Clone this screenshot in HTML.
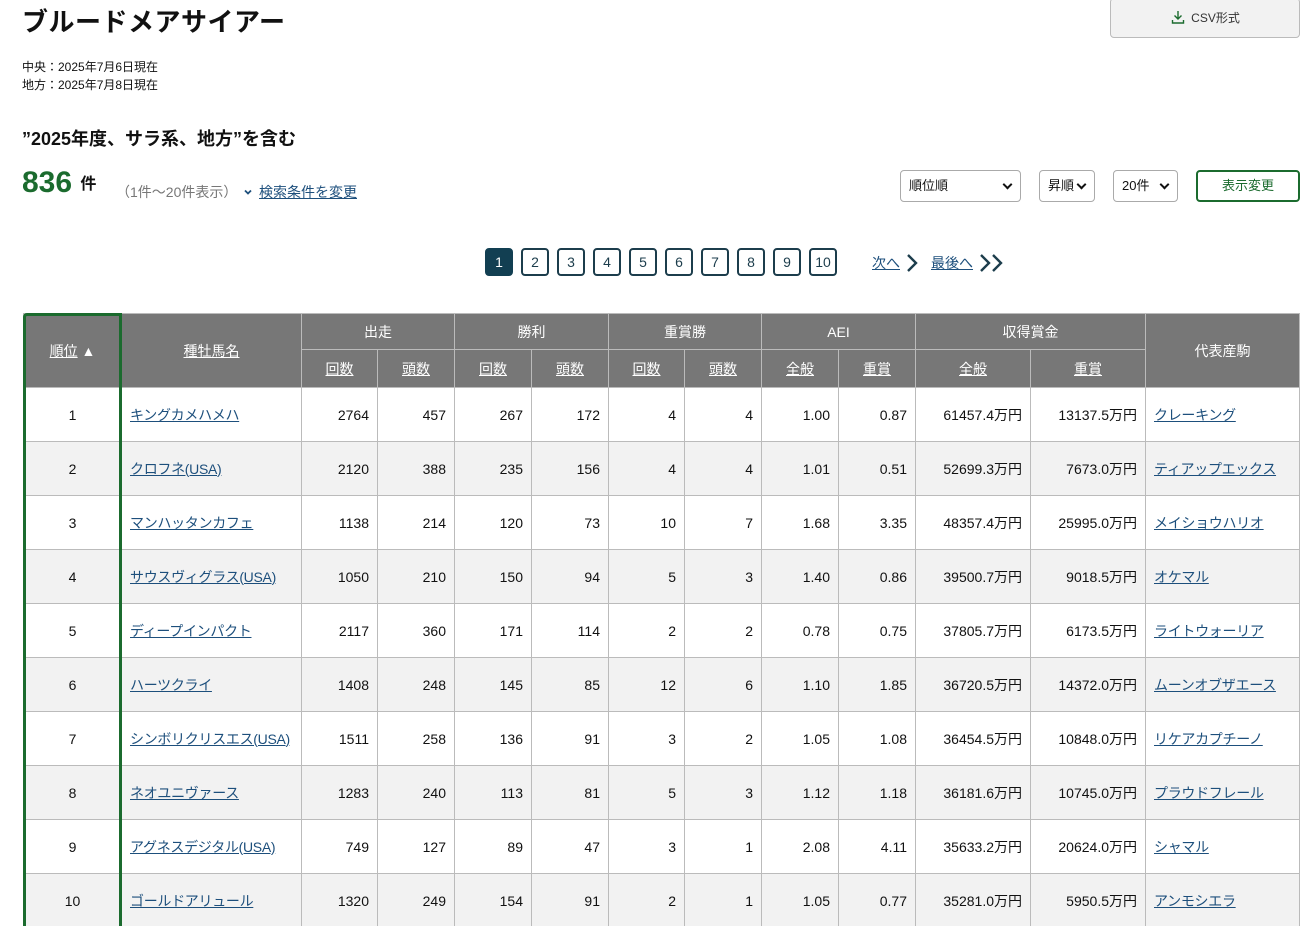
<!DOCTYPE html>
<html><head><meta charset="utf-8">
<style>
*{box-sizing:border-box;margin:0;padding:0}
html,body{width:1311px;height:926px;overflow:hidden}
body{background:#fff;font-family:"Liberation Sans","Noto Sans CJK JP",sans-serif;color:#111;position:relative}
.abs{position:absolute}
h1{position:absolute;left:22px;top:2px;font-size:26px;font-weight:700;letter-spacing:0.5px}
.date{position:absolute;left:22px;font-size:12px;line-height:18px}
.cond{position:absolute;left:22px;top:125px;font-size:18px;font-weight:700}
.count{position:absolute;left:22px;top:166px;font-size:30px;font-weight:700;color:#1b6b2e}
a{color:#1d4f7c;text-decoration:underline}
.sel{position:absolute;top:170px;height:32px;border:1px solid #aaa;border-radius:4px;font-size:13px;padding:0 8px;line-height:30px;background:#fff}
.sel::after{content:"";position:absolute;right:9px;top:10px;width:5px;height:5px;border-right:2px solid #111;border-bottom:2px solid #111;transform:rotate(45deg)}
.pg{position:absolute;top:248px;width:28px;height:28px;border:2px solid #1c3d4c;border-radius:4px;font-size:14px;text-align:center;line-height:24px;color:#1c3d4c}
table{position:absolute;left:23px;top:313px;border-collapse:collapse;table-layout:fixed;font-size:14px}
th{background:#777;color:#fff;font-weight:normal;border:1px solid #bbb;font-size:14px}
td{border:1px solid #bbb;height:54px;padding:0 8px;text-align:right;white-space:nowrap}
tr.e td{background:#f2f2f2}
td.c{text-align:center}
td.l{text-align:left;letter-spacing:-0.3px}
</style></head><body>
<h1>ブルードメアサイアー</h1>
<div class="date" style="top:58px">中央：2025年7月6日現在</div>
<div class="date" style="top:76px">地方：2025年7月8日現在</div>
<div class="abs" style="left:1110px;top:-2px;width:190px;height:40px;background:#f2f2f2;border:1px solid #bbb;border-radius:4px;font-size:12px;text-align:center;line-height:38px;color:#333">
<svg width="16" height="16" viewBox="0 0 16 16" style="vertical-align:-3px;margin-right:5px"><path d="M8 2v8M4.5 6.5L8 10l3.5-3.5M2.5 11v3h11v-3" fill="none" stroke="#1b6b2e" stroke-width="1.4"/></svg>CSV形式</div>
<div class="cond">”2025年度、サラ系、地方”を含む</div>
<div class="count">836 <span style="font-size:16px;color:#111;position:relative;top:-3px">件</span></div>
<div class="abs" style="left:116px;top:182px;font-size:14px;color:#777">（1件～20件表示）</div>
<div class="abs" style="left:243px;top:182px;font-size:14px"><svg width="10" height="10" viewBox="0 0 10 10" style="margin-right:6px"><path d="M2 3.5l3 3 3-3" fill="none" stroke="#1d4f7c" stroke-width="1.8"/></svg><a>検索条件を変更</a></div>
<div class="sel" style="left:900px;width:121px">順位順</div>
<div class="sel" style="left:1039px;width:56px">昇順</div>
<div class="sel" style="left:1113px;width:65px">20件</div>
<div class="abs" style="left:1196px;top:170px;width:104px;height:32px;border:2px solid #1b6b2e;border-radius:4px;text-align:center;line-height:28px;font-size:13px;color:#1b6b2e">表示変更</div>
<div class="pg" style="left:485px;background:#123f52;color:#fff;border-color:#123f52">1</div>
<div class="pg" style="left:521px">2</div><div class="pg" style="left:557px">3</div><div class="pg" style="left:593px">4</div><div class="pg" style="left:629px">5</div><div class="pg" style="left:665px">6</div><div class="pg" style="left:701px">7</div><div class="pg" style="left:737px">8</div><div class="pg" style="left:773px">9</div><div class="pg" style="left:809px">10</div>
<div class="abs" style="left:872px;top:253px;font-size:14px"><a>次へ</a></div>
<svg class="abs" style="left:905px;top:253px" width="14" height="20" viewBox="0 0 14 20"><path d="M3 2l8 8-8 8" fill="none" stroke="#1c3d4c" stroke-width="2.4"/></svg>
<div class="abs" style="left:931px;top:253px;font-size:14px"><a>最後へ</a></div>
<svg class="abs" style="left:978px;top:253px" width="30" height="20" viewBox="0 0 30 20"><path d="M3 2l8 8-8 8M15 2l8 8-8 8" fill="none" stroke="#1c3d4c" stroke-width="2.4"/></svg>
<table>
<colgroup><col style="width:98px"><col style="width:180px"><col style="width:76px"><col style="width:77px"><col style="width:77px"><col style="width:77px"><col style="width:76px"><col style="width:77px"><col style="width:77px"><col style="width:77px"><col style="width:115px"><col style="width:115px"><col style="width:154px"></colgroup>
<tr style="height:36px"><th rowspan="2"><u>順位</u> ▲</th><th rowspan="2"><u>種牡馬名</u></th><th colspan="2">出走</th><th colspan="2">勝利</th><th colspan="2">重賞勝</th><th colspan="2">AEI</th><th colspan="2">収得賞金</th><th rowspan="2">代表産駒</th></tr>
<tr style="height:38px"><th><u>回数</u></th><th><u>頭数</u></th><th><u>回数</u></th><th><u>頭数</u></th><th><u>回数</u></th><th><u>頭数</u></th><th><u>全般</u></th><th><u>重賞</u></th><th><u>全般</u></th><th><u>重賞</u></th></tr>
<tr><td class="c">1</td><td class="l"><a>キングカメハメハ</a></td><td>2764</td><td>457</td><td>267</td><td>172</td><td>4</td><td>4</td><td>1.00</td><td>0.87</td><td>61457.4万円</td><td>13137.5万円</td><td class="l"><a>クレーキング</a></td></tr>
<tr class="e"><td class="c">2</td><td class="l"><a>クロフネ(USA)</a></td><td>2120</td><td>388</td><td>235</td><td>156</td><td>4</td><td>4</td><td>1.01</td><td>0.51</td><td>52699.3万円</td><td>7673.0万円</td><td class="l"><a>ティアップエックス</a></td></tr>
<tr><td class="c">3</td><td class="l"><a>マンハッタンカフェ</a></td><td>1138</td><td>214</td><td>120</td><td>73</td><td>10</td><td>7</td><td>1.68</td><td>3.35</td><td>48357.4万円</td><td>25995.0万円</td><td class="l"><a>メイショウハリオ</a></td></tr>
<tr class="e"><td class="c">4</td><td class="l"><a>サウスヴィグラス(USA)</a></td><td>1050</td><td>210</td><td>150</td><td>94</td><td>5</td><td>3</td><td>1.40</td><td>0.86</td><td>39500.7万円</td><td>9018.5万円</td><td class="l"><a>オケマル</a></td></tr>
<tr><td class="c">5</td><td class="l"><a>ディープインパクト</a></td><td>2117</td><td>360</td><td>171</td><td>114</td><td>2</td><td>2</td><td>0.78</td><td>0.75</td><td>37805.7万円</td><td>6173.5万円</td><td class="l"><a>ライトウォーリア</a></td></tr>
<tr class="e"><td class="c">6</td><td class="l"><a>ハーツクライ</a></td><td>1408</td><td>248</td><td>145</td><td>85</td><td>12</td><td>6</td><td>1.10</td><td>1.85</td><td>36720.5万円</td><td>14372.0万円</td><td class="l"><a>ムーンオブザエース</a></td></tr>
<tr><td class="c">7</td><td class="l"><a>シンボリクリスエス(USA)</a></td><td>1511</td><td>258</td><td>136</td><td>91</td><td>3</td><td>2</td><td>1.05</td><td>1.08</td><td>36454.5万円</td><td>10848.0万円</td><td class="l"><a>リケアカプチーノ</a></td></tr>
<tr class="e"><td class="c">8</td><td class="l"><a>ネオユニヴァース</a></td><td>1283</td><td>240</td><td>113</td><td>81</td><td>5</td><td>3</td><td>1.12</td><td>1.18</td><td>36181.6万円</td><td>10745.0万円</td><td class="l"><a>プラウドフレール</a></td></tr>
<tr><td class="c">9</td><td class="l"><a>アグネスデジタル(USA)</a></td><td>749</td><td>127</td><td>89</td><td>47</td><td>3</td><td>1</td><td>2.08</td><td>4.11</td><td>35633.2万円</td><td>20624.0万円</td><td class="l"><a>シャマル</a></td></tr>
<tr class="e"><td class="c">10</td><td class="l"><a>ゴールドアリュール</a></td><td>1320</td><td>249</td><td>154</td><td>91</td><td>2</td><td>1</td><td>1.05</td><td>0.77</td><td>35281.0万円</td><td>5950.5万円</td><td class="l"><a>アンモシエラ</a></td></tr>
</table>
<div class="abs" style="left:23px;top:313px;width:99px;height:640px;border:3px solid #1b6b2e;border-bottom:none;border-radius:4px 0 0 0"></div>
</body></html>
